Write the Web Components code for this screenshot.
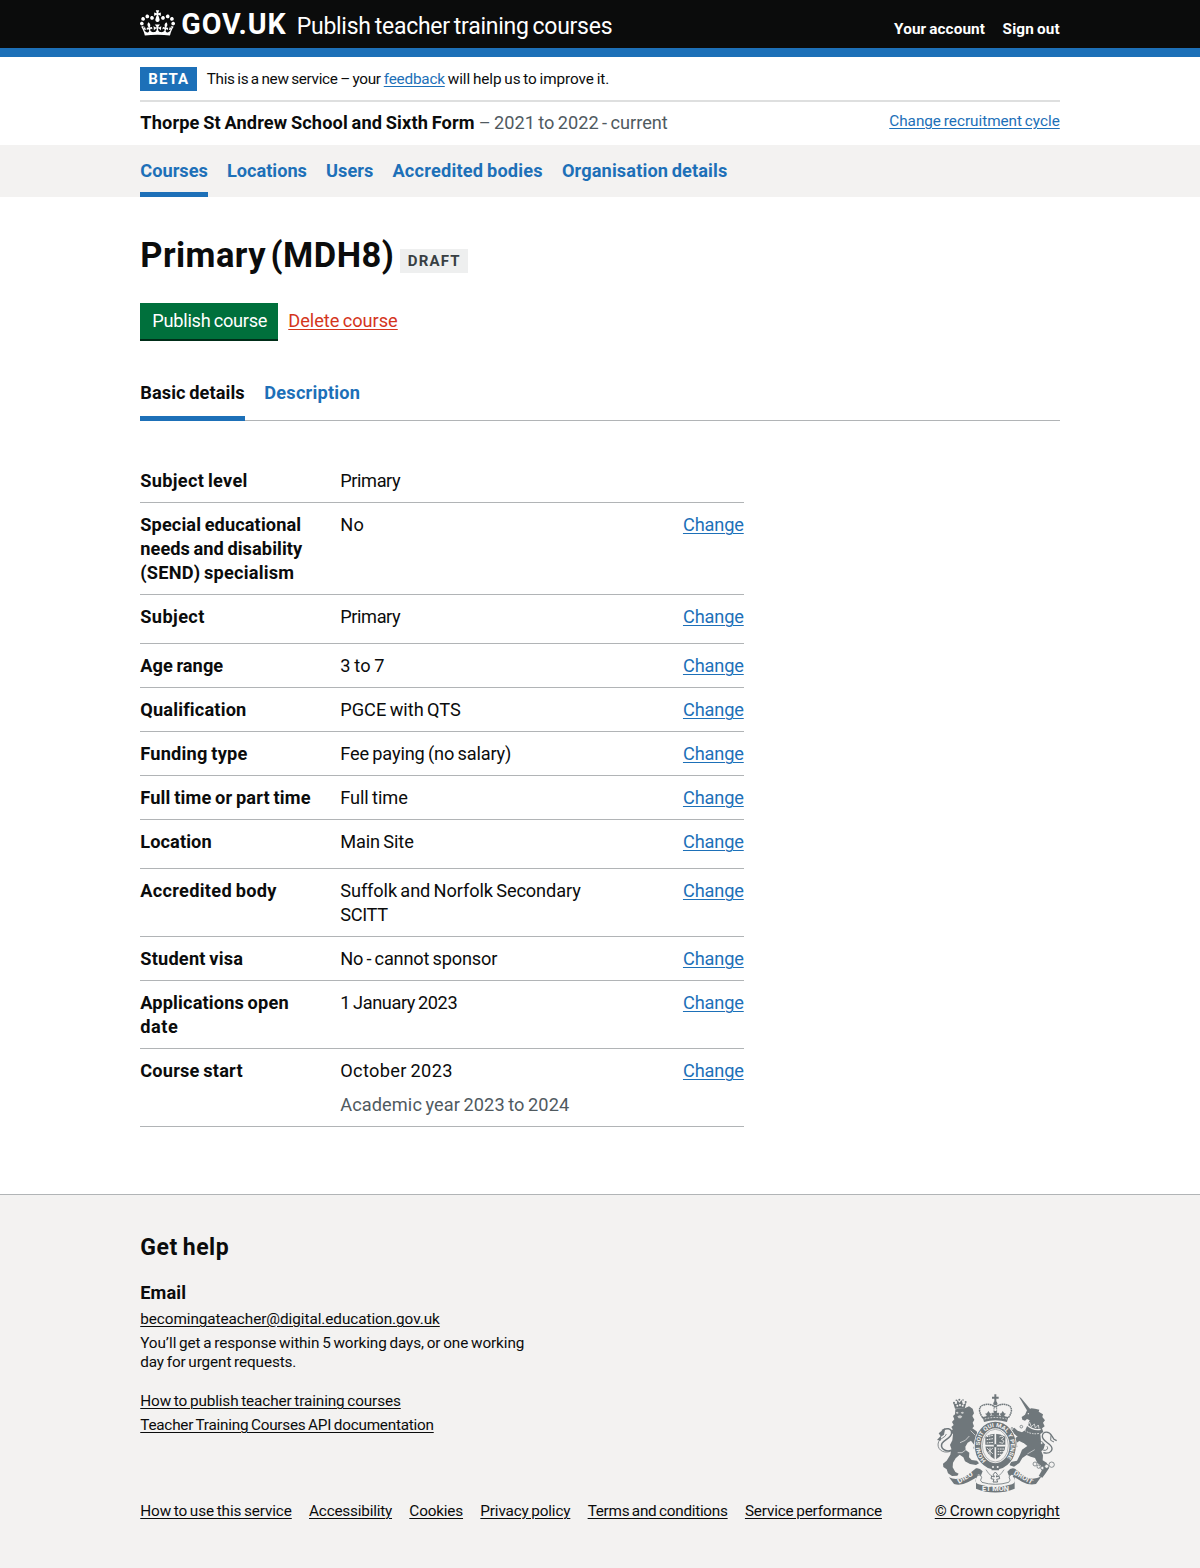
<!DOCTYPE html>
<html lang="en">
<head>
<meta charset="utf-8">
<title>Primary (MDH8) - Publish teacher training courses</title>
<style>
  html, body { margin: 0; background: #fff; }
  body { font-family: Roboto, "Liberation Sans", sans-serif; color: #0b0c0c; -webkit-font-smoothing: antialiased; }
</style>
</head>
<body>
<course-page></course-page>
<script>
// Builds a custom element from a style string and a markup string.
function define(name, css, html, ready) {
  const tpl = document.createElement('template');
  tpl.innerHTML = `<style>${css}</style>${html}`;
  customElements.define(name, class extends HTMLElement {
    constructor() {
      super();
      this.attachShadow({ mode: 'open' }).append(tpl.content.cloneNode(true));
    }
    connectedCallback() { if (ready) ready(this, this.shadowRoot); }
  });
}

// A single line of text tracked to a measure: w is its width in pixels.
define('text-run',
  `:host{display:inline-block;white-space:nowrap;vertical-align:top}
   :host([bold]){font-weight:700}
   span{display:inline-block;word-spacing:var(--word-gap,-.06em)}
   :host([link]) span{text-decoration:underline;text-decoration-thickness:1.2px;text-underline-offset:2px;cursor:pointer}`,
  `<span><slot></slot></span>`,
  (el, root) => {
    const span = root.querySelector('span');
    const w = parseFloat(el.getAttribute('w'));
    const n = el.textContent.length;
    span.style.letterSpacing = '0px';
    const natural = span.getBoundingClientRect().width;
    if (w && natural) span.style.letterSpacing = ((w - natural) / n).toFixed(4) + 'px';
    el.style.width = w + 'px';
  });

define('page-width', `:host{display:block;width:919.5px;margin:0 auto}`, `<slot></slot>`);

define('crown-logo', `:host{display:block;width:35px;height:26px}svg{display:block}`,
  `<svg width="35" height="26" viewBox="0 0 132 97" fill="#fff" fill-rule="evenodd"><path d="M25 30.2c3.5 1.5 7.7-.2 9.1-3.7 1.5-3.6-.2-7.8-3.9-9.2-3.6-1.4-7.6.3-9.1 3.9-1.4 3.5.3 7.5 3.9 9zM9 39.5c3.6 1.5 7.8-.2 9.2-3.7 1.5-3.6-.2-7.8-3.9-9.1-3.6-1.5-7.6.2-9.1 3.8-1.4 3.5.3 7.5 3.8 9zM4.4 57.2c3.5 1.5 7.7-.2 9.1-3.8 1.5-3.6-.2-7.7-3.9-9.1-3.5-1.5-7.6.3-9.1 3.8-1.4 3.5.3 7.6 3.9 9.1zm38.3-21.4c3.5 1.5 7.7-.2 9.1-3.8 1.5-3.6-.2-7.7-3.9-9.1-3.6-1.5-7.6.3-9.1 3.8-1.3 3.6.4 7.7 3.9 9.1zm64.4-5.6c-3.6 1.5-7.8-.2-9.1-3.7-1.5-3.6.2-7.8 3.8-9.2 3.6-1.4 7.7.3 9.2 3.9 1.3 3.5-.4 7.5-3.9 9zm15.9 9.3c-3.6 1.5-7.7-.2-9.1-3.7-1.5-3.6.2-7.8 3.7-9.1 3.6-1.5 7.7.2 9.2 3.8 1.5 3.5-.3 7.5-3.8 9zm4.7 17.7c-3.6 1.5-7.8-.2-9.2-3.8-1.5-3.6.2-7.7 3.9-9.1 3.6-1.5 7.7.3 9.2 3.8 1.3 3.5-.4 7.6-3.9 9.1zM89.3 35.8c-3.6 1.5-7.8-.2-9.2-3.8-1.4-3.6.2-7.7 3.9-9.1 3.6-1.5 7.7.3 9.2 3.8 1.4 3.6-.3 7.7-3.9 9.1zM69.7 17.7l8.9 4.7V9.3l-8.9 2.8c-.2-.3-.5-.6-.9-.9L72.4 0H59.6l3.5 11.2c-.3.3-.6.5-.9.9l-8.8-2.8v13.1l8.8-4.7c.3.3.6.7.9.9l-5 15.4v.1c-.2.8-.4 1.6-.4 2.4 0 4.1 3.1 7.5 7 8.1h.2c.3 0 .7.1 1 .1.4 0 .7 0 1-.1h.2c4-.6 7.1-4.1 7.1-8.1 0-.8-.1-1.7-.4-2.4V34l-5.1-15.4c.4-.2.7-.6 1-.9zM66 92.8c16.9 0 32.8 1.1 47.1 3.2 4-16.9 8.9-26.7 14-33.5l-9.6-3.4c1 4.9 1.1 7.2 0 10.2-1.5-1.4-3-4.3-4.2-8.7L108.6 76c2.8-2 5-3.2 7.5-3.3-4.4 9.4-10 11.9-13.6 11.2-4.3-.8-6.3-4.6-5.6-7.9 1-4.7 5.7-5.9 8-.5 4.3-8.7-3-11.4-7.6-8.8 7.1-7.2 7.9-13.5 2.1-21.1-8 6.1-8.1 12.3-4.5 20.8-4.7-5.4-12.1-2.5-9.5 6.2 3.4-5.2 7.9-2 7.2 3.1-.6 4.3-6.4 7.8-13.5 7.2-10.3-.9-10.9-8-11.2-13.8 2.5-.5 7.1 1.8 11 7.3L80.2 60c-4.1 4.4-8 5.3-12.3 5.4 1.4-4.4 8-11.6 8-11.6H55.5s6.4 7.2 7.9 11.6c-4.2-.1-8-1-12.3-5.4l1.4 16.4c3.9-5.5 8.5-7.7 10.9-7.3-.3 5.8-.9 12.8-11.1 13.8-7.2.6-12.9-2.9-13.5-7.2-.7-5 3.8-8.3 7.1-3.1 2.7-8.7-4.6-11.6-9.4-6.2 3.7-8.5 3.6-14.7-4.6-20.8-5.8 7.6-5 13.9 2.2 21.1-4.7-2.6-11.9.1-7.7 8.8 2.3-5.5 7.1-4.2 8.1.5.7 3.3-1.3 7.1-5.7 7.9-3.5.7-9-1.8-13.5-11.2 2.5.1 4.7 1.3 7.5 3.3l-4.7-15.4c-1.2 4.4-2.7 7.2-4.3 8.7-1.1-3-.9-5.3 0-10.2l-9.5 3.4c5 6.9 9.9 16.7 14 33.5 14.8-2.1 30.8-3.2 47.7-3.2z"/></svg>`);

// Royal arms: lion, crowned shield inside its garter, unicorn, motto scroll.
define('royal-arms', `:host{display:block;width:125px;height:100px}svg{display:block}`,
  `<svg width="125" height="100" viewBox="45 37 375 300" fill="#6f777b" stroke="none" font-family="Roboto, sans-serif" font-weight="700">
    <g id="lion">
      <path d="M100 67L105 84H134L139 66L129 72L125 58L118 66L112 58L110 71Z" />
      <g fill="#f3f2f1"><circle cx="112" cy="75" r="3"/><circle cx="120" cy="73" r="3"/><circle cx="128" cy="75" r="3"/></g>
      <circle cx="118" cy="57" r="3"/><circle cx="102" cy="66" r="3"/><circle cx="137" cy="64" r="3"/><circle cx="109" cy="59" r="2.5"/><circle cx="129" cy="58" r="2.5"/>
      <path d="M106 86L134 83L147 77L158 84L162 98L157 106L163 117L158 126L162 137L157 143L170 152L174 166L168 174L178 184L178 204L170 209L160 203L163 193L153 180L143 186L136 198L137 208L148 216L147 230L155 238L171 240L177 248L168 253L150 250L135 242L130 230L119 222L107 233L99 246L98 260L106 274L116 279L112 285L96 286L84 278L80 266L70 259L69 249L80 240L91 222L94 204L90 193L97 179L99 160L92 155L98 146L94 139L101 133L96 124L103 116L99 106L105 101Z"/>
      <path d="M107 95l6-2 3 4-5 3zM122 95l7-2 3 4-6 3zM112 107l8-3 7 3-4 6h-7z" fill="#f3f2f1" opacity=".7"/>
      <path d="M92 212C66 221 48 202 56 183C62 171 77 171 79 160" fill="none" stroke="#6f777b" stroke-width="2.5"/>
      <path d="M94 209C75 215 60 202 66 188C74 176 94 172 95 157C96 143 78 140 66 150" fill="none" stroke="#6f777b" stroke-width="4.5"/>
      <path d="M51 178l13-14-2 16zM56 158l20-16-4 20-9 6z"/>
      <path d="M120 186q18-4 28-20M113 216q14 4 24-8M152 150l14 14" fill="none" stroke="#f3f2f1" stroke-width="2"/>
    </g>
    <g id="unicorn">
      <path d="M297 48L303 52L331 86L322 91Z"/>
      <path d="M321 89L334 83L345 84L358 87L356 93L369 101L367 109L375 119L369 126L374 137L366 143L370 154L361 160L363 182L375 191L371 204L364 212L369 224L368 239L380 246L388 261L378 276L367 291L356 286L365 270L363 255L352 247L345 232L332 228L320 223L307 232L298 247L282 258L269 254L272 244L291 240L300 222L306 207L322 196L310 186L303 176L290 166L281 158L275 148L283 141L293 150L306 155L316 148L321 137L329 119L321 115L315 120L307 117L305 109L315 102Z"/>
      <path d="M310 187L298 181L290 186L292 199L284 201L279 192L280 176L292 168L312 171L327 183Z"/>
      <path d="M320 132Q338 150 362 146" fill="none" stroke="#f3f2f1" stroke-width="4"/>
      <path d="M316 124l7 9 6-8 5 13 9-8 3 12 9-9 2 11" fill="none" stroke="#f3f2f1" stroke-width="2.2"/>
      <path d="M314 149Q332 163 360 158" fill="none" stroke="#f3f2f1" stroke-width="2.4" stroke-dasharray="5 3"/>
      <circle cx="325" cy="99" r="2" fill="#f3f2f1"/>
      <path d="M370 216C391 222 402 207 392 195C384 185 366 180 367 166C369 151 387 151 395 165L402 176L410 180" fill="none" stroke="#6f777b" stroke-width="4"/>
      <path d="M365 206C377 214 387 205 381 197M393 164l-1 15 10 5" fill="none" stroke="#6f777b" stroke-width="3"/>
      <path d="M322 220L344 207" fill="none" stroke="#f3f2f1" stroke-width="1.8"/>
      <g fill="#f3f2f1" stroke="#6f777b" stroke-width="2.4"><circle cx="345" cy="250" r="6"/><circle cx="356" cy="258" r="5"/><circle cx="367" cy="262" r="5"/><circle cx="380" cy="257" r="6"/><circle cx="395" cy="252" r="8"/><circle cx="276" cy="145" r="4"/><circle cx="304" cy="138" r="4"/><circle cx="365" cy="187" r="4"/></g>
    </g>
    <g id="crown">
      <path d="M223 41h6v7h7v6h-7v10h-6V54h-7v-6h7z"/>
      <path d="M188 111C172 88 178 75 194 72C207 68 220 74 226 80C232 74 246 68 259 72C276 75 280 91 265 111Z" fill="#f3f2f1" stroke="#6f777b" stroke-width="4.5" stroke-dasharray="5 1.5"/>
      <path d="M222 70V105M230 70V105" fill="none" stroke="#6f777b" stroke-width="2.5" stroke-dasharray="4 1.5"/>
      <circle cx="226" cy="68" r="6"/>
      <path d="M205 91l5 7 5 1-5 5 2 6h-14l2-6-5-5 6-1zM248 91l5 7 5 1-5 5 2 6h-14l2-6-5-5 6-1zM221 91h10l-1 6 7-1v9l-7-1v7h-8v-7l-7 1v-9l7 1z"/>
      <path d="M188 109Q226 98 265 109L261 124Q226 114 192 124Z"/>
      <path d="M194 115Q226 106 260 115" fill="none" stroke="#f3f2f1" stroke-width="2.5" stroke-dasharray="5 4"/>
    </g>
    <g id="shield">
      <ellipse cx="226" cy="195" rx="64" ry="74" fill="#f3f2f1"/>
      <ellipse cx="226" cy="195" rx="52" ry="62" fill="none" stroke="#6f777b" stroke-width="19"/>
      <ellipse cx="226" cy="195" rx="39" ry="49" fill="#f3f2f1" stroke="#6f777b" stroke-width="1.5"/>
      <path id="garter" d="M198 239.7A46 56 0 0 1 226 139A46 56 0 0 1 254 239.7" fill="none"/>
      <text font-size="17" fill="#f3f2f1" stroke="none"><textPath href="#garter" textLength="250" lengthAdjust="spacingAndGlyphs">HONI SOIT QUI MAL Y PENSE</textPath></text>
      <path d="M196 168Q226 151 256 168V195H196ZM196 196H256Q255 220 226 237Q197 220 196 196Z" fill="#6f777b"/>
      <path d="M226 153V239M195 195H257" stroke="#f3f2f1" stroke-width="5"/>
      <path d="M200 168l19-4M200 177l19-3M200 187l19-2M233 205h20M233 213h19M233 221h14" stroke="#f3f2f1" stroke-width="3" stroke-dasharray="5 2"/>
      <path d="M238 169l8-3 5 5-7 5 8 5-4 7-10-3M201 202l18 18M219 202l-17 15M210 201v24" fill="none" stroke="#f3f2f1" stroke-width="2.3"/>
      <circle cx="226" cy="195" r="5"/>
      <path d="M211 249h29l-3 20h-22z"/><circle cx="219" cy="259" r="3" fill="#f3f2f1"/><circle cx="233" cy="259" r="3" fill="#f3f2f1"/>
    </g>
    <g id="scroll">
      <path d="M87 290Q112 302 143 283L168 263Q178 260 188 272L182 287Q174 280 168 294Q164 307 176 311Q226 327 276 311Q288 307 282 292Q276 279 267 286L262 273Q273 259 285 264L309 284Q334 303 365 287L348 310Q327 315 306 303L284 290L284 324Q226 347 168 324L168 291L145 304Q122 316 102 310Z"/>
      <path d="M170 283Q179 275 185 290Q178 300 186 305Q226 317 266 305Q274 300 267 289Q275 275 283 286" fill="#f3f2f1" stroke="#6f777b" stroke-width="2.5"/>
      <path d="M226 274l6 7-3 8 8-3 2 8-9 2 3 8h-14l3-8-9-2 2-8 8 3-3-8z" fill="#f3f2f1" stroke="#6f777b" stroke-width="3"/>
      <path d="M198 267q7 13 18 20M252 267q-7 13-18 20" fill="none" stroke="#6f777b" stroke-width="2"/>
      <g fill="#f3f2f1" font-size="20">
        <text x="117" y="309" textLength="50" lengthAdjust="spacingAndGlyphs" transform="rotate(-31 117 309)">DIEU</text>
        <text x="186" y="331" textLength="81" lengthAdjust="spacingAndGlyphs">ET MON</text>
        <text x="280" y="281" textLength="62" lengthAdjust="spacingAndGlyphs" transform="rotate(29 280 281)">DROIT</text>
      </g>
    </g>
  </svg>`);

define('site-header',
  `:host{display:block;background:#0b0c0c;color:#fff;border-bottom:9px solid #1d70b8;height:48px}
   .bar{display:flex;height:48px;align-items:flex-start}
   crown-logo{margin-top:10px}
   .gov{font-size:28.6px;line-height:30px;margin:9px 0 0 6px}
   .name{font-size:23px;line-height:30px;margin:12px 0 0 10px}
   nav{margin-left:auto;margin-top:19px;display:flex;gap:17.5px;font-size:15.3px;line-height:20px}`,
  `<page-width><div class="bar"><crown-logo></crown-logo>
   <text-run class="gov" bold w="105.5">GOV.UK</text-run>
   <text-run class="name" w="315.5">Publish teacher training courses</text-run>
   <nav><text-run bold w="91">Your account</text-run><text-run bold w="57.2">Sign out</text-run></nav></div></page-width>`);

define('status-tag',
  `:host{display:inline-block;box-sizing:border-box;height:24px;padding:2px 8px 0;font-size:15px;line-height:21px;background:#1d70b8;color:#fff;font-weight:700}
   :host([grey]){background:#eeefef;color:#383f43;padding:2px 7.5px 0}`, `<slot></slot>`);

define('phase-banner',
  `:host{display:flex;height:43px;border-bottom:2px solid #dedfdf;font-size:15.3px;line-height:20px}
   status-tag{margin:10px 9.5px 0 0}
   p{margin:12px 0 0;display:flex;gap:3px}
   text-run[link]{color:#1d70b8}`,
  `<status-tag><text-run w="41">BETA</text-run></status-tag>
   <p><text-run w="174">This is a new service – your</text-run><text-run link w="61">feedback</text-run><text-run w="161.5">will help us to improve it.</text-run></p>`);

define('provider-bar',
  `:host{display:flex;height:43px;font-size:18.2px;line-height:24px}
   .org{margin-top:9px}
   .year{margin:9px 0 0 4px;color:#505a5f}
   .cycle{margin:9px 0 0 auto;font-size:15.3px;line-height:20px;color:#1d70b8}`,
  `<text-run class="org" bold w="334.5">Thorpe St Andrew School and Sixth Form</text-run>
   <text-run class="year" w="189">– 2021 to 2022 - current</text-run>
   <text-run class="cycle" link w="170.5">Change recruitment cycle</text-run>`);

define('nav-item',
  `:host{display:block;box-sizing:border-box;color:#1d70b8;font-weight:700;font-size:18.2px;line-height:24px}
   :host([current]){border-bottom:5px solid #1d70b8}
   :host([dark]){color:#0b0c0c}`, `<slot></slot>`);

define('primary-nav',
  `:host{display:block;background:#f3f2f1;height:52px}
   nav{display:flex;gap:19px}
   nav-item{height:52px;padding-top:14px}`,
  `<page-width><nav><nav-item current><text-run w="67.7">Courses</text-run></nav-item>
   <nav-item><text-run w="80">Locations</text-run></nav-item>
   <nav-item><text-run w="47.5">Users</text-run></nav-item>
   <nav-item><text-run w="150.5">Accredited bodies</text-run></nav-item>
   <nav-item><text-run w="165.5">Organisation details</text-run></nav-item></nav></page-width>`);

define('course-title',
  `:host{display:flex;height:105px}
   h1{margin:36px 0 0;font-size:34.5px;line-height:44px;font-weight:700;--word-gap:-.13em}
   status-tag{margin:52px 0 0 6px}`,
  `<h1><text-run w="254">Primary (MDH8)</text-run></h1><status-tag grey><text-run w="53">DRAFT</text-run></status-tag>`);

define('course-actions',
  `:host{display:flex;height:71px;font-size:18.2px;line-height:24px}
   button{all:unset;box-sizing:border-box;display:flex;align-items:flex-start;width:138px;height:36px;padding:6px 0 0 12px;margin-top:1px;background:#00703c;color:#fff;box-shadow:0 2px 0 #002d18}
   .delete{color:#d4351c;margin:7px 0 0 10px}`,
  `<button><text-run w="115">Publish course</text-run></button><text-run class="delete" link w="109.5">Delete course</text-run>`);

define('tab-bar',
  `:host{display:flex;gap:19.5px;height:47px;border-bottom:1px solid #b1b4b6}
   nav-item{height:48px;padding-top:8px}`,
  `<nav-item current dark><text-run w="104.5">Basic details</text-run></nav-item><nav-item><text-run w="96">Description</text-run></nav-item>`);

define('summary-row',
  `:host{display:flex;box-sizing:border-box;width:603.5px;padding:10px 0 9px;border-bottom:1px solid #b1b4b6;font-size:18.2px;line-height:24px}
   :host([loose]){padding-bottom:14px}
   .key,.value{display:flex;flex-direction:column;align-items:flex-start}
   .key{width:200px;font-weight:700}
   .action{margin-left:auto;color:#1d70b8}
   ::slotted(.hint){color:#505a5f;margin-top:10px}`,
  `<div class="key"><slot name="key"></slot></div><div class="value"><slot></slot></div><div class="action"><slot name="action"></slot></div>`);

const rows = [
  [[['Subject level', 107.5]], [['Primary', 60]], 'fixed'],
  [[['Special educational', 161], ['needs and disability', 162], ['(SEND) specialism', 154]], [['No', 24]]],
  [[['Subject', 64.5]], [['Primary', 60]], 'loose'],
  [[['Age range', 83]], [['3 to 7', 44.5]]],
  [[['Qualification', 106]], [['PGCE with QTS', 120.5]]],
  [[['Funding type', 107.3]], [['Fee paying (no salary)', 171]]],
  [[['Full time or part time', 170.5]], [['Full time', 67.5]]],
  [[['Location', 71.5]], [['Main Site', 73.5]], 'loose'],
  [[['Accredited body', 136.5]], [['Suffolk and Norfolk Secondary', 240.5], ['SCITT', 47.5]]],
  [[['Student visa', 103]], [['No - cannot sponsor', 157]]],
  [[['Applications open', 148.5], ['date', 38]], [['1 January 2023', 117]]],
  [[['Course start', 102.5]], [['October 2023', 112.5], ['Academic year 2023 to 2024', 229, 'hint']]]
];
const summary = rows.map(([keys, values, mode]) =>
  `<summary-row ${mode === 'loose' ? 'loose' : ''}>` +
  keys.map(([t, w]) => `<text-run slot="key" w="${w}">${t}</text-run>`).join('') +
  values.map(([t, w, c]) => `<text-run class="${c || ''}" w="${w}">${t}</text-run>`).join('') +
  (mode === 'fixed' ? '' : `<text-run slot="action" link w="60.8">Change</text-run>`) +
  `</summary-row>`).join('');
define('summary-list', `:host{display:block;padding-top:38px}`, summary);

define('site-footer',
  `:host{display:block;box-sizing:border-box;margin-top:67px;height:374px;background:#f3f2f1;border-top:1px solid #b1b4b6}
   .help{display:flex;flex-direction:column;align-items:flex-start;font-size:15.3px;line-height:20px;padding-top:38px}
   h2,h3{margin:0}
   h2{font-size:23px;line-height:30px}
   h3{font-size:18.2px;line-height:24px;margin:18px 0 4px}
   .reply{margin-top:5px;line-height:19px}
   .more{margin-top:19px}.next{margin-top:4px}
   .meta{display:flex;align-items:flex-end;font-size:15.3px;line-height:20px;margin-top:-42px}
   .links{display:flex;gap:17.3px}
   .crown{margin-left:auto;display:flex;flex-direction:column;align-items:flex-start}
   royal-arms{height:108px}`,
  `<page-width><div class="help">
   <h2><text-run w="89">Get help</text-run></h2>
   <h3><text-run w="46">Email</text-run></h3>
   <text-run link w="299.5">becomingateacher@digital.education.gov.uk</text-run>
   <text-run class="reply" w="384">You’ll get a response within 5 working days, or one working</text-run>
   <text-run style="line-height:19px" w="156">day for urgent requests.</text-run>
   <text-run class="more" link w="260.5">How to publish teacher training courses</text-run>
   <text-run class="next" link w="293.5">Teacher Training Courses API documentation</text-run></div>
   <div class="meta"><div class="links">
   <text-run link w="151.5">How to use this service</text-run><text-run link w="83">Accessibility</text-run><text-run link w="53.7">Cookies</text-run><text-run link w="90">Privacy policy</text-run><text-run link w="140">Terms and conditions</text-run><text-run link w="137">Service performance</text-run></div>
   <div class="crown"><royal-arms></royal-arms><text-run link w="125">© Crown copyright</text-run></div></div></page-width>`);

define('course-page', `:host{display:block}`,
  `<site-header></site-header>
   <page-width><phase-banner></phase-banner><provider-bar></provider-bar></page-width>
   <primary-nav></primary-nav>
   <page-width><course-title></course-title><course-actions></course-actions><tab-bar></tab-bar><summary-list></summary-list></page-width>
   <site-footer></site-footer>`);
</script>
</body>
</html>
